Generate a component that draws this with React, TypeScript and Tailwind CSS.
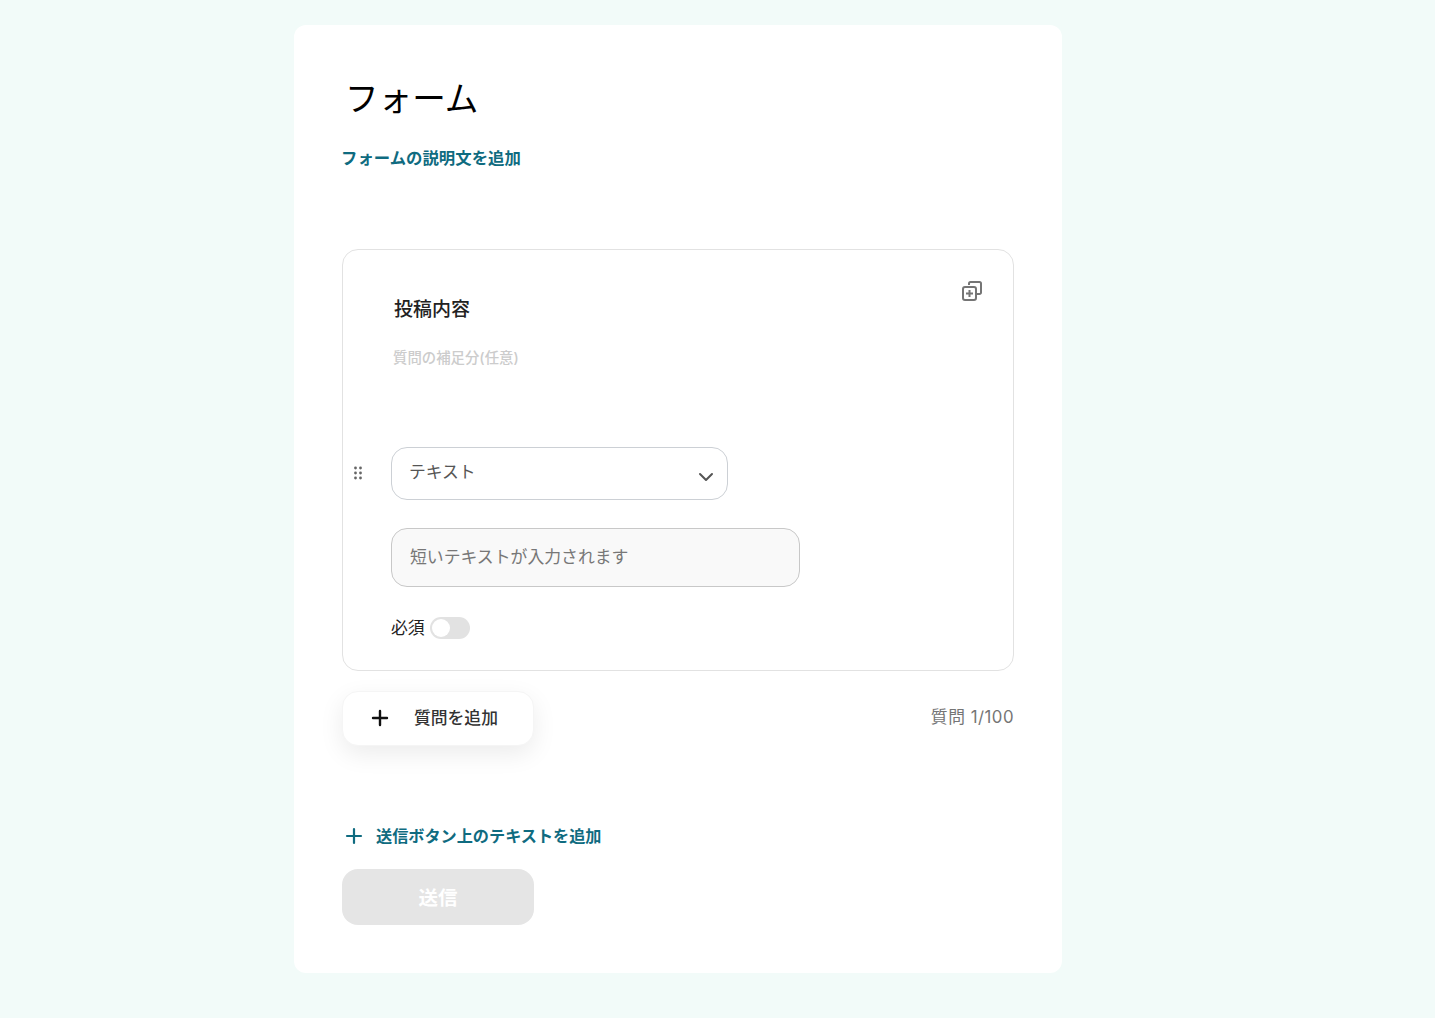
import { ChevronDown, Plus } from "lucide-react";

const font = "font-['Inter','Noto_Sans_CJK_JP',sans-serif]";

function CopyPlusIcon() {
  return (
    <svg width="22" height="22" viewBox="0 0 22 22" fill="none" stroke="#757575" strokeWidth="2">
      <path d="M8 5V3.5A1.5 1.5 0 0 1 9.5 2h9A1.5 1.5 0 0 1 20 3.5v9a1.5 1.5 0 0 1-1.5 1.5H15" />
      <rect x="2" y="7" width="13" height="13" rx="2" />
      <path d="M8.5 10v7M5 13.5h7" />
    </svg>
  );
}

function DragHandle() {
  return (
    <svg width="8" height="14" viewBox="0 0 8 14" fill="#666666">
      <circle cx="1.5" cy="2" r="1.4" />
      <circle cx="6.5" cy="2" r="1.4" />
      <circle cx="1.5" cy="7" r="1.4" />
      <circle cx="6.5" cy="7" r="1.4" />
      <circle cx="1.5" cy="12" r="1.4" />
      <circle cx="6.5" cy="12" r="1.4" />
    </svg>
  );
}

export default function App() {
  return (
    <div className={`min-h-[1018px] bg-[#f2fbf9] pt-[25px] pl-[294px] ${font}`}>
      <div className="flex h-[948px] w-[768px] flex-col rounded-xl bg-white px-12 pt-[50px]">
        {/* Title */}
        <h1 className="pl-[3px] text-[33.6px] leading-[48px] text-black">フォーム</h1>
        <button className="mt-[23px] -ml-px self-start text-[16.4px] leading-6 font-semibold text-[#0f6b80]">
          フォームの説明文を追加
        </button>

        {/* Question card */}
        <div className="mt-[79px] flex h-[422px] flex-col rounded-2xl border border-[#e2e2e2] pl-12">
          <div className="flex justify-end pt-[30px] pr-[30px]">
            <CopyPlusIcon />
          </div>
          <div className="-mt-[6px] pl-[3px] text-[19px] leading-7 font-medium text-[#222222]">投稿内容</div>
          <div className="mt-[24px] pl-[2px] text-[14.4px] leading-5 font-medium text-[#cccccc]">質問の補足分(任意)</div>

          <div className="relative mt-[79px] flex h-[53px] w-[337px] items-center justify-between rounded-2xl border border-[#ccd0d5] pr-[9px] pl-[17px]">
            <div className="absolute top-[18px] -left-[38px]">
              <DragHandle />
            </div>
            <span className="-mt-[1px] text-[16.8px] text-[#555555]">テキスト</span>
            <ChevronDown size={24} strokeWidth={2} className="mt-[7px] text-[#555555]" />
          </div>

          <div className="mt-7 flex h-[59px] w-[409px] items-center rounded-2xl border border-[#c8c8c8] bg-[#f9f9f9] pl-[18px] text-[16.85px] text-[#777777]">
            短いテキストが入力されます
          </div>

          <div className="mt-[30px] flex items-center gap-[5px]">
            <span className="text-[16.8px] leading-[22px] text-[#222222]">必須</span>
            <div className="flex h-[22px] w-10 items-center rounded-full bg-[#e2e2e2] pl-[2px]">
              <div className="h-[18px] w-[18px] rounded-full bg-white" />
            </div>
          </div>
        </div>

        {/* Add question */}
        <div className="mt-5 flex items-center justify-between">
          <button className="flex h-[55px] w-[192px] items-center rounded-2xl border border-[#f5f5f5] bg-white pl-[25px] shadow-[0_8px_24px_rgba(0,0,0,0.08)]">
            <Plus size={24} strokeWidth={2.4} className="mb-[2px] text-[#111111]" />
            <span className="ml-[22px] text-[16.8px] font-medium text-[#333333]">質問を追加</span>
          </button>
          <span className="mb-[1px] text-[16.8px] tracking-[0.5px] text-[#757575]">質問 1/100</span>
        </div>

        {/* Footer */}
        <button className="mt-[78px] flex items-center self-start text-[16.15px] leading-6 font-semibold text-[#0f6b80]">
          <Plus size={24} strokeWidth={2.2} />
          <span className="ml-[10px]">送信ボタン上のテキストを追加</span>
        </button>
        <button className="mt-[21px] h-14 w-[192px] rounded-2xl bg-[#e5e5e5] pt-1 text-[19.5px] font-semibold text-white">
          送信
        </button>
      </div>
    </div>
  );
}
